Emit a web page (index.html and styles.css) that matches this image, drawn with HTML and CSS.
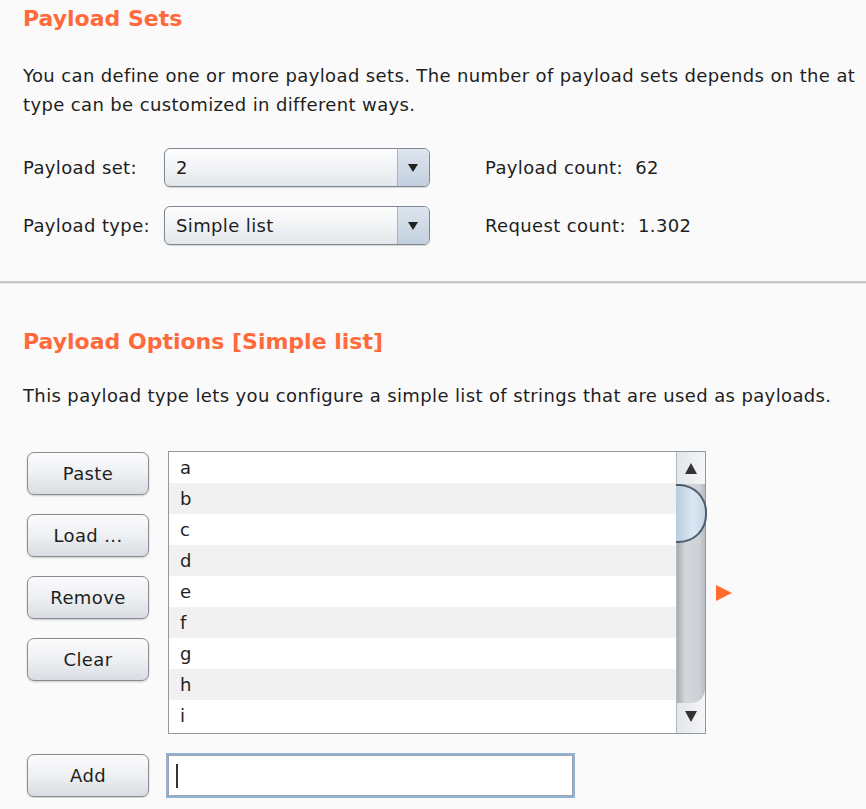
FILE: index.html
```html
<!DOCTYPE html>
<html lang="en">
<head>
    <meta charset="UTF-8">
    <title>Payload Sets</title>
    <link rel="stylesheet" href="styles.css">
</head>
<body>

<div class="section">
    <h2>Payload Sets</h2>
    <p class="desc clip">You can define one or more payload sets. The number of payload sets depends on the at<br>type can be customized in different ways.</p>

    <div class="settings">
        <label>Payload set:</label>
        <div class="combo"><span>2</span><span class="combo-arrow"></span></div>
        <div class="stat">Payload count:&nbsp; 62</div>

        <label>Payload type:</label>
        <div class="combo"><span>Simple list</span><span class="combo-arrow"></span></div>
        <div class="stat">Request count:&nbsp; 1.302</div>
    </div>
</div>

<div class="divider"></div>

<div class="section">
    <h2 class="second">Payload Options [Simple list]</h2>
    <p class="desc options-desc">This payload type lets you configure a simple list of strings that are used as payloads.</p>

    <div class="editor">
        <div class="buttons">
            <button>Paste</button>
            <button>Load ...</button>
            <button>Remove</button>
            <button>Clear</button>
        </div>
        <div class="list">
            <ul>
                <li>a</li>
                <li>b</li>
                <li>c</li>
                <li>d</li>
                <li>e</li>
                <li>f</li>
                <li>g</li>
                <li>h</li>
                <li>i</li>
            </ul>
            <div class="scrollbar">
                <div class="arrow up"></div>
                <div class="track"><div class="thumb"></div></div>
                <div class="arrow down"></div>
            </div>
        </div>
        <div class="expand"></div>
    </div>

    <div class="add-row">
        <button>Add</button>
        <div class="add-input"><span class="caret"></span></div>
    </div>
</div>

</body>
</html>
```

FILE: styles.css
```css
body {
    margin: 0;
    background: #fafafa;
    font-family: "DejaVu Sans", Verdana, sans-serif;
    font-size: 18px;
    letter-spacing: 0.37px;
    color: #1e1e1e;
    overflow: hidden;
}
.section {
    padding-left: 23px;
}
h2 {
    margin: 0;
    padding-top: 5px;
    color: #ff6a3d;
    font-size: 22px;
    font-weight: bold;
    letter-spacing: 0;
    line-height: 28px;
}
h2.second {
    padding-top: 44px;
}
.desc {
    margin: 0;
    padding-top: 28px;
    line-height: 29px;
}
.clip {
    white-space: nowrap;
    overflow: hidden;
}
.options-desc {
    padding-top: 25px;
}
.settings {
    display: grid;
    grid-template-columns: 141px 266px auto;
    row-gap: 19px;
    align-items: center;
    margin-top: 29px;
}
.combo {
    display: flex;
    height: 37px;
    border: 1px solid #7d8894;
    border-radius: 6px;
    background: linear-gradient(#fdfdfd, #f2f3f5 50%, #e3e6ea);
    box-shadow: 0 1px 1px rgba(0,0,0,0.15);
    overflow: hidden;
}
.combo span:first-child {
    flex: 1;
    padding-left: 11px;
    line-height: 37px;
}
.combo-arrow {
    width: 31px;
    border-left: 1px solid #aab4c0;
    background: linear-gradient(#dde5ee, #c3d0de);
    position: relative;
}
.combo-arrow::after {
    content: "";
    position: absolute;
    left: 10px;
    top: 15px;
    border-left: 5px solid transparent;
    border-right: 5px solid transparent;
    border-top: 8px solid #222;
}
.stat {
    padding-left: 55px;
}
.divider {
    margin-top: 36px;
    height: 2px;
    background: #c4c6ca;
    border-bottom: 1px solid #e2e4e8;
}
.editor {
    display: flex;
    align-items: center;
    margin-top: 41px;
}
.buttons {
    display: flex;
    flex-direction: column;
    gap: 19px;
    align-self: flex-start;
    margin-left: 4px;
    margin-top: 1px;
    margin-right: 19px;
}
button {
    width: 122px;
    height: 43px;
    border: 1px solid #868c94;
    border-radius: 7px;
    background: linear-gradient(#fbfbfc, #eef0f2 50%, #d9dde2);
    box-shadow: 0 1px 2px rgba(0,0,0,0.2);
    font-family: "DejaVu Sans", Verdana, sans-serif;
    font-size: 18px;
    letter-spacing: 0.37px;
    color: #1e1e1e;
    padding: 0;
}
.list {
    display: flex;
    width: 536px;
    height: 281px;
    border: 1px solid #9098a2;
    background: #fff;
}
.list ul {
    flex: 1;
    margin: 0;
    padding: 0;
    list-style: none;
}
.list li {
    height: 31px;
    line-height: 31px;
    padding-left: 11px;
}
.list li:nth-child(even) {
    background: #f1f1f1;
}
.scrollbar {
    width: 28px;
    display: flex;
    flex-direction: column;
    border-left: 1px solid #b4bac2;
    background: linear-gradient(90deg, #e4e6ea, #f4f5f7);
}
.arrow {
    height: 32px;
    position: relative;
}
.arrow::after {
    content: "";
    position: absolute;
    left: 8px;
    border-left: 6px solid transparent;
    border-right: 6px solid transparent;
}
.arrow.up::after {
    top: 11px;
    border-bottom: 11px solid #333;
}
.arrow.down::after {
    top: 10px;
    border-top: 11px solid #333;
}
.track {
    flex: 1;
    position: relative;
}
.thumb {
    position: absolute;
    left: 0;
    right: 0;
    top: 0;
    bottom: -2px;
    background: linear-gradient(90deg, #a8acb2, #d3d6db 30%, #cdd0d5 80%, #b8bcc2);
    border-radius: 0 0 14px 0;
}
.thumb::before {
    content: "";
    position: absolute;
    left: -1px;
    right: -2px;
    top: 0;
    height: 55px;
    background: linear-gradient(90deg, #b8cde0, #dbe8f3 60%, #c4d6e6);
    border: 2px solid #4c5c6c;
    border-left: none;
    border-radius: 0 28px 28px 0;
}
.expand {
    width: 0;
    height: 0;
    margin-left: 10px;
    border-top: 8px solid transparent;
    border-bottom: 8px solid transparent;
    border-left: 16px solid #ff6a2d;
}
.add-row {
    display: flex;
    align-items: center;
    margin-top: 19px;
}
.add-row button {
    margin-left: 4px;
    margin-right: 17px;
}
.add-input {
    width: 405px;
    height: 41px;
    border: 2px solid #8fb2d6;
    outline: 1px solid #a0a4aa;
    outline-offset: -3px;
    background: #fff;
    display: flex;
    align-items: center;
}
.caret {
    width: 2px;
    height: 24px;
    margin-left: 8px;
    background: #333;
}
```
